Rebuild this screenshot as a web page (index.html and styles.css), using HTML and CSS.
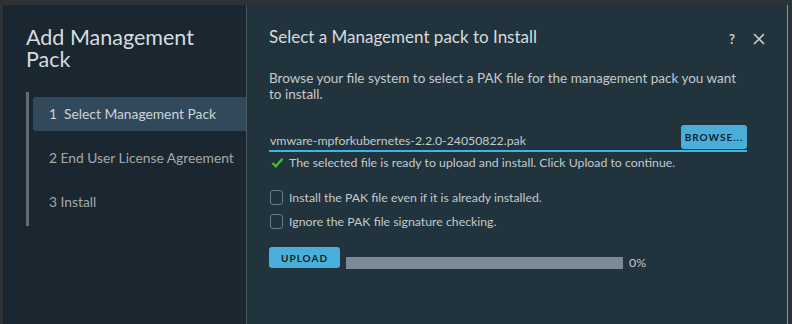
FILE: index.html
```html
<!DOCTYPE html>
<html lang="en">
<head>
  <meta charset="UTF-8" />
  <title>Add Management Pack</title>
  <link rel="stylesheet" href="styles.css">
</head>
<body>

  <div class="modal">
    <!-- Left: wizard steps -->
    <div class="steps">
      <h1>Add Management Pack</h1>
      <div class="step-list">
        <div class="step active">1&nbsp; Select Management Pack</div>
        <div class="step">2 End User License Agreement</div>
        <div class="step">3 Install</div>
      </div>
    </div>

    <!-- Right: content -->
    <div class="content">
      <div class="head">
        <h2>Select a Management pack to Install</h2>
        <div class="head-icons">
          <span class="help">?</span>
          <svg class="close" width="12" height="12" viewBox="0 0 12 12"><path d="M1 1L11 11M11 1L1 11" stroke="#c8cdd0" stroke-width="1.6"/></svg>
        </div>
      </div>

      <p class="desc">Browse your file system to select a PAK file for the management pack you want to install.</p>

      <div class="file-row">
        <span class="file-name">vmware-mpforkubernetes-2.2.0-24050822.pak</span>
        <button class="btn browse">BROWSE...</button>
      </div>
      <div class="ok">
        <svg width="13" height="11" viewBox="0 0 13 11"><path d="M1.5 6L4.8 9.2L11.5 1.8" fill="none" stroke="#4fb830" stroke-width="2.4"/></svg>
        The selected file is ready to upload and install. Click Upload to continue.
      </div>

      <label class="check"><span class="box"></span>Install the PAK file even if it is already installed.</label>
      <label class="check"><span class="box"></span>Ignore the PAK file signature checking.</label>

      <div class="upload-row">
        <button class="btn upload">UPLOAD</button>
        <div class="bar"></div>
        <span class="pct">0%</span>
      </div>
    </div>
  </div>

</body>
</html>
```

FILE: styles.css
```css
* {
  box-sizing: border-box;
}

html, body {
  margin: 0;
  padding: 0;
  background: #2c3236;
  font-family: 'Lato', sans-serif;
  height: 324px;
  overflow: hidden;
}

.modal {
  display: flex;
  margin: 5px 0 0 3px;
  width: 785px;
  height: 330px;
  border-right: 1px solid #8a9093;
}

.steps {
  width: 244px;
  background: #1b2730;
  border-right: 1px solid #4b565b;
  padding: 21px 0 0 23px;
}

h1 {
  margin: 0;
  font-weight: 400;
  font-size: 21.5px;
  line-height: 22px;
  color: #d6dcdf;
  width: 200px;
}

.step-list {
  margin-top: 22px;
  border-left: 3px solid #666c70;
  padding: 5px 0 0 4px;
  height: 134px;
}

.step {
  height: 34px;
  padding-left: 16px;
  line-height: 34px;
  font-size: 13.8px;
  color: #a4a9ab;
  margin-bottom: 10px;
}

.step.active {
  background: #31495a;
  color: #cfd4d6;
  border-radius: 3px 0 0 3px;
}

.content {
  flex: 1;
  background: #21333c;
  padding: 21px 22px 0 22px;
  color: #c4cacd;
}

.head {
  display: flex;
  justify-content: space-between;
  align-items: center;
}

h2 {
  margin: 0;
  font-weight: 400;
  font-size: 17px;
  color: #d6dcdf;
}

.head-icons {
  display: flex;
  align-items: center;
  gap: 18px;
  padding-right: 0;
  padding-top: 5px;
}

.help {
  font-size: 13px;
  font-weight: 700;
  color: #c8cdd0;
}

.desc {
  margin: 23px 0 0;
  font-size: 13.5px;
  line-height: 16px;
  width: 480px;
}

.file-row {
  margin-top: 23px;
  display: flex;
  justify-content: space-between;
  align-items: flex-end;
  border-bottom: 2px solid #39b6ea;
  width: 478px;
}

.file-name {
  font-size: 12.3px;
  padding: 0 0 2px 1px;
}

.btn {
  border: none;
  border-radius: 3px;
  background: #49afd9;
  color: #0d1f26;
  font-family: 'Lato', sans-serif;
  font-weight: 700;
  font-size: 10px;
  letter-spacing: 1px;
  padding: 0;
}

.browse {
  width: 66px;
  height: 24px;
  margin-bottom: 1px;
}

.ok {
  margin-top: 3px;
  font-size: 12.3px;
  display: flex;
  align-items: center;
  gap: 5px;
  padding-left: 2px;
}

.check {
  display: flex;
  align-items: center;
  font-size: 12.3px;
  margin-top: 9px;
  gap: 6px;
  padding-left: 1px;
}

.check:first-of-type {
  margin-top: 20px;
}

.box {
  width: 13px;
  height: 15px;
  border: 1px solid #6c7a82;
  border-radius: 3px;
}

.upload-row {
  display: flex;
  align-items: center;
  margin-top: 16px;
}

.upload {
  width: 71px;
  height: 21px;
}

.bar {
  width: 277px;
  height: 12px;
  background: #7a8a98;
  margin: 11px 0 0 6px;
}

.pct {
  font-size: 12.3px;
  margin: 10px 0 0 6px;
}
```
